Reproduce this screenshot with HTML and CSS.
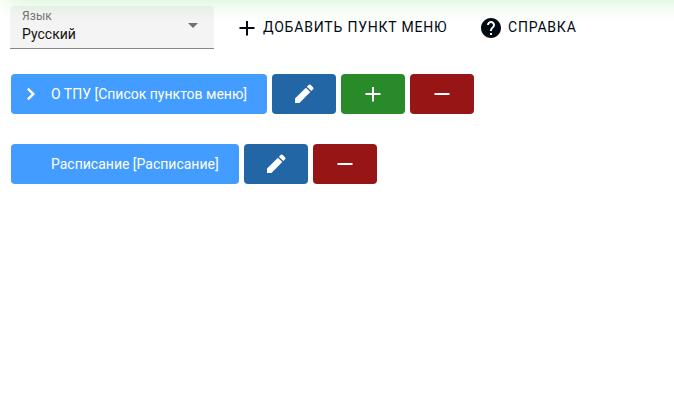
FILE: index.html
```
<!DOCTYPE html>
<html lang="ru">
<head>
<meta charset="utf-8">
<title>Меню</title>
<link rel="stylesheet" href="styles.css">
</head>
<body>
<svg class="defs" width="0" height="0">
<symbol id="add" viewBox="0 0 24 24"><path d="M19.500 13H13v6.500h-2V13H4.500v-2H11V5h2v6h6.500z"/></symbol>
<symbol id="remove" viewBox="0 0 24 24"><path d="M19.500 13h-15v-2h15z"/></symbol>
<symbol id="edit" viewBox="0 0 24 24"><path d="M3 16.600V21h4.400L18.300 10.100l-4.400-4.400L3 16.600zM21.200 7.200a1.300 1.300 0 0 0 0-1.700l-2.700-2.700a1.300 1.300 0 0 0-1.700 0l-1.900 1.900 4.400 4.400 1.900-1.900z"/></symbol>
<symbol id="chevron" viewBox="0 0 24 24"><path d="M8 16.500 12.500 12 8 7.500 9.700 5.800l6.300 6.200-6.300 6.200z"/></symbol>
<symbol id="help" viewBox="0 0 24 24"><path d="M12 2C6.480 2 2 6.480 2 12s4.480 10 10 10 10-4.480 10-10S17.520 2 12 2zm1 17h-2v-2h2v2zm2.070-7.750-.9.920C13.450 12.900 13 13.500 13 15h-2v-.5c0-1.100.450-2.100 1.170-2.830l1.240-1.260c.370-.360.590-.860.590-1.410 0-1.100-.9-2-2-2s-2 .9-2 2H8c0-2.210 1.790-4 4-4s4 1.790 4 4c0 .880-.360 1.680-.930 2.250z"/></symbol>
</svg>
<div class="glow"></div>
<header class="toolbar">
<div class="select">
<div class="select-text"><span class="label">Язык</span><span class="value">Русский</span></div>
<svg class="arrow" viewBox="0 0 10 5"><path d="M0 0h10L5 5z"/></svg>
</div>
<button class="action add"><svg class="icon"><use href="#add"/></svg><span class="caption">ДОБАВИТЬ ПУНКТ МЕНЮ</span></button>
<button class="action help"><svg class="icon"><use href="#help"/></svg><span class="caption">СПРАВКА</span></button>
</header>
<main class="list">
<div class="row">
<button class="btn item item-wide"><span class="toggle"><svg class="icon"><use href="#chevron"/></svg></span><span>О ТПУ [Список пунктов меню]</span></button>
<button class="btn edit"><svg class="icon"><use href="#edit"/></svg></button>
<button class="btn create"><svg class="icon"><use href="#add"/></svg></button>
<button class="btn delete"><svg class="icon"><use href="#remove"/></svg></button>
</div>
<div class="row">
<button class="btn item item-narrow"><span class="toggle"></span><span>Расписание [Расписание]</span></button>
<button class="btn edit"><svg class="icon"><use href="#edit"/></svg></button>
<button class="btn delete"><svg class="icon"><use href="#remove"/></svg></button>
</div>
</main>
</body>
</html>
```
FILE: styles.css
```
* { box-sizing: border-box; }
body { margin: 0; height: 407px; overflow: hidden; background: #fff; font-family: Roboto, sans-serif; font-size: 14px; color: #000a12; }
button { border: 0; padding: 0; margin: 0; font: inherit; color: inherit; background: none; white-space: nowrap; }
.defs { position: absolute; }
.glow { position: absolute; top: -40px; left: 8px; right: -40px; height: 40px; box-shadow: 0 0 25px rgba(50, 205, 50, .25); pointer-events: none; }
.icon { width: 24px; height: 24px; flex: none; fill: currentColor; display: block; }
.toolbar { position: relative; display: flex; padding: 6px 0 0 10px; height: 49px; }
.select { width: 204px; height: 43px; display: flex; align-items: center; justify-content: space-between; padding: 0 16px 0 12px; background: rgba(0, 0, 0, .045); border-bottom: 1px solid #878787; border-radius: 4px 4px 0 0; }
.select-text { display: flex; flex-direction: column; padding-bottom: 4px; }
.label { font-size: 12px; line-height: 18px; letter-spacing: .1px; color: #737373; }
.value { line-height: 18px; color: #111; }
.arrow { width: 10px; height: 5px; margin-top: -3px; fill: #707070; }
.action { display: flex; align-items: center; gap: 4px; height: 43px; letter-spacing: .8px; }
.caption { margin-top: -1px; }
.add { width: 213px; margin-left: 21px; }
.help { margin-left: 31px; gap: 5px; }
.list { padding: 25px 0 0 11px; display: flex; flex-direction: column; gap: 30px; }
.row { display: flex; gap: 5px; }
.btn { width: 64px; height: 40px; border-radius: 4px; color: #fff; display: flex; align-items: center; justify-content: center; }
.item { background: #439cff; justify-content: flex-start; padding-left: 8px; }
.item-wide { width: 256px; }
.item-narrow { width: 228px; }
.toggle { width: 32px; }
.edit { background: #2366a5; }
.create { background: #298a29; }
.delete { background: #981515; }
```
